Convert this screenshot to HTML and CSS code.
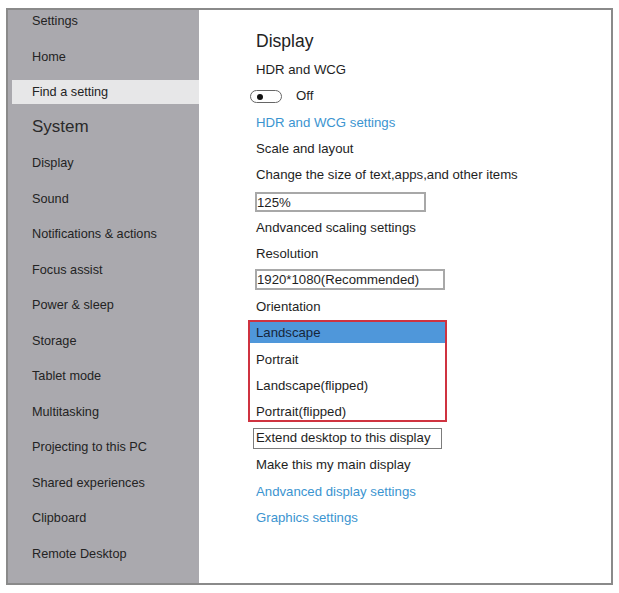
FILE: index.html
```html
<!DOCTYPE html>
<html lang="en">
<head>
<meta charset="utf-8">
<title>Display settings</title>
<link rel="stylesheet" href="styles.css">
</head>
<body>
<div class="frame">
  <nav class="sidebar">
    <div class="nav-item first">Settings</div>
    <div class="nav-item">Home</div>
    <div class="nav-item search">Find a setting</div>
    <div class="nav-item heading">System</div>
    <div class="nav-item">Display</div>
    <div class="nav-item">Sound</div>
    <div class="nav-item">Notifications &amp; actions</div>
    <div class="nav-item">Focus assist</div>
    <div class="nav-item">Power &amp; sleep</div>
    <div class="nav-item">Storage</div>
    <div class="nav-item">Tablet mode</div>
    <div class="nav-item">Multitasking</div>
    <div class="nav-item">Projecting to this PC</div>
    <div class="nav-item">Shared experiences</div>
    <div class="nav-item">Clipboard</div>
    <div class="nav-item">Remote Desktop</div>
  </nav>
  <main class="content">
    <h1 class="title">Display</h1>
    <div class="row">HDR and WCG</div>
    <div class="row toggle-row"><span class="toggle"><span class="knob"></span></span><span class="toggle-label">Off</span></div>
    <div class="row link">HDR and WCG settings</div>
    <div class="row">Scale and layout</div>
    <div class="row">Change the size of text,apps,and other items</div>
    <div class="row"><div class="field field-scale">125%</div></div>
    <div class="row">Andvanced scaling settings</div>
    <div class="row">Resolution</div>
    <div class="row"><div class="field field-res">1920*1080(Recommended)</div></div>
    <div class="row">Orientation</div>
    <div class="options">
      <div class="option selected">Landscape</div>
      <div class="option">Portrait</div>
      <div class="option">Landscape(flipped)</div>
      <div class="option">Portrait(flipped)</div>
    </div>
    <div class="field field-extend">Extend desktop to this display</div>
    <div class="row">Make this my main display</div>
    <div class="row link">Andvanced display settings</div>
    <div class="row link">Graphics settings</div>
  </main>
</div>
</body>
</html>
```

FILE: styles.css
```css
* { box-sizing: border-box; }

html, body {
  margin: 0;
  padding: 0;
  background: #ffffff;
}

body {
  font-family: "Liberation Sans", Arial, sans-serif;
  color: #1e1e1e;
}

.frame {
  margin: 8px 0 0 6px;
  width: 607px;
  height: 577px;
  border: 2px solid #8a8a8a;
  display: flex;
  overflow: hidden;
}

.sidebar {
  width: 191px;
  flex: none;
  background: #aaa9ae;
  display: flex;
  flex-direction: column;
  gap: 11.5px;
}

.nav-item {
  height: 24px;
  line-height: 24px;
  padding-left: 24px;
  font-size: 12.7px;
  color: #232323;
  white-space: nowrap;
}

.nav-item.first { margin-top: -1px; }

.nav-item.search {
  margin-left: 4px;
  padding-left: 20px;
  background: #e7e7e8;
}

.nav-item.heading {
  font-size: 17px;
  line-height: 22px;
  color: #2a2a2a;
}

.content {
  flex: 1;
  padding: 19px 0 0 57px;
  display: flex;
  flex-direction: column;
  font-size: 13.2px;
}

.title {
  margin: 0 0 4px;
  height: 24px;
  line-height: 24px;
  font-size: 17.5px;
  font-weight: normal;
  color: #222;
}

.row {
  height: 26.35px;
  line-height: 26.35px;
  display: flex;
  align-items: center;
  white-space: nowrap;
}

.link { color: #3b94d0; }

.toggle-row { margin-left: -6px; }

.toggle {
  width: 32px;
  height: 13px;
  border: 1px solid #666;
  border-radius: 7px;
  display: flex;
  align-items: center;
  padding-left: 6px;
}

.knob {
  width: 6px;
  height: 6px;
  border-radius: 50%;
  background: #111;
}

.toggle-label { margin-left: 14px; }

.field {
  line-height: 17px;
  padding-left: 0;
  border: 2px solid #a8a8a8;
  white-space: nowrap;
}

.field-scale {
  width: 171px;
  height: 20px;
  margin-left: -1px;
}

.field-res {
  width: 190px;
  height: 21px;
  margin-left: -1px;
  line-height: 18px;
  margin-top: -2px;
}

.options {
  margin: 0 0 0 -8px;
  width: 199px;
  height: 102px;
  border: 2px solid #cf3340;
  display: flex;
  flex-direction: column;
  gap: 5.3px;
}

.option {
  height: 21px;
  line-height: 21px;
  padding-left: 6px;
  white-space: nowrap;
}

.option.selected {
  background: #4f97da;
  color: #16263a;
}

.field-extend {
  margin: 6px 0 3px -3px;
  width: 189px;
  height: 21px;
  line-height: 18px;
  padding-left: 2px;
  border: 1.5px solid #7c7c7c;
}
```
